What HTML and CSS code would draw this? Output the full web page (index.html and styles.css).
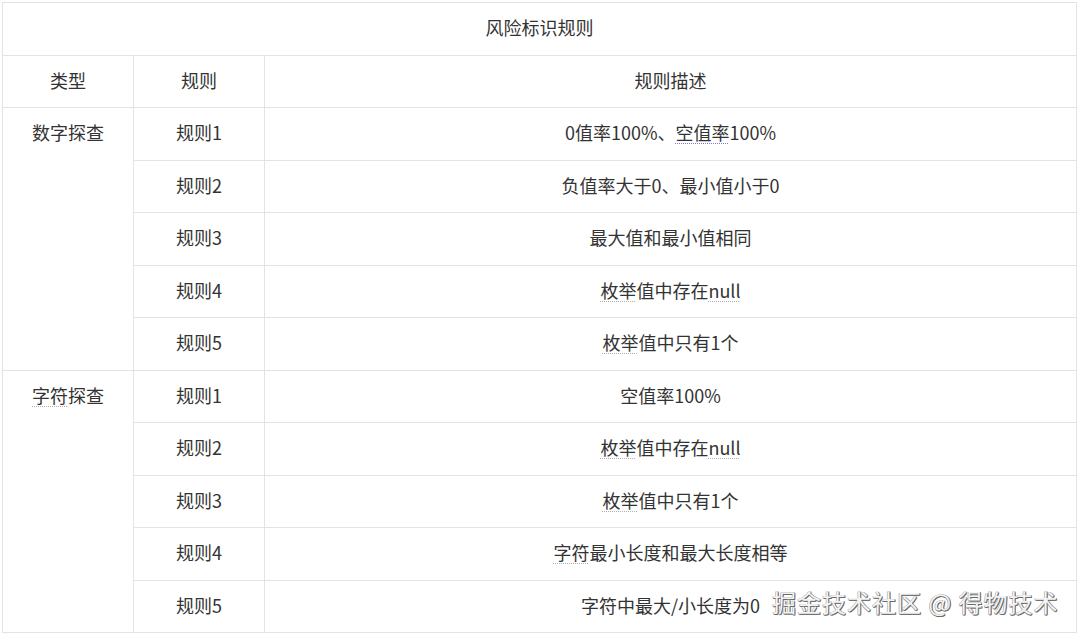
FILE: index.html
```html
<!DOCTYPE html>
<html lang="zh">
<head>
<meta charset="utf-8">
<title>风险标识规则</title>
<link rel="stylesheet" href="styles.css">
</head>
<body>
<div class="wrap">
<table class="rules">
  <colgroup>
    <col class="c-type">
    <col class="c-rule">
    <col class="c-desc">
  </colgroup>
  <tr><td colspan="3">风险标识规则</td></tr>
  <tr><td>类型</td><td>规则</td><td>规则描述</td></tr>
  <tr><td rowspan="5" class="type">数字探查</td><td>规则1</td><td>0值率100%、<span class="sp-purple">空值率</span>100%</td></tr>
  <tr><td>规则2</td><td>负值率大于0、最小值小于0</td></tr>
  <tr><td>规则3</td><td>最大值和最小值相同</td></tr>
  <tr><td>规则4</td><td><span class="sp">枚举</span>值中存在<span class="sp">null</span></td></tr>
  <tr><td>规则5</td><td><span class="sp">枚举</span>值中只有1个</td></tr>
  <tr><td rowspan="5" class="type"><span class="sp">字符</span>探查</td><td>规则1</td><td>空值率100%</td></tr>
  <tr><td>规则2</td><td><span class="sp">枚举</span>值中存在<span class="sp">null</span></td></tr>
  <tr><td>规则3</td><td><span class="sp">枚举</span>值中只有1个</td></tr>
  <tr><td>规则4</td><td><span class="sp">字符</span>最小长度和最大长度相等</td></tr>
  <tr><td>规则5</td><td>字符中最大/小长度为0</td></tr>
</table>
<div class="watermark">掘金技术社区 @ 得物技术</div>
</div>
</body>
</html>
```

FILE: styles.css
```css
html, body {
  margin: 0;
  padding: 0;
  background: #ffffff;
}
body {
  font-family: "Noto Sans CJK SC", "Noto Sans", sans-serif;
  color: #333333;
}
.wrap {
  position: relative;
  width: 1080px;
  height: 634px;
  padding: 2px 0 0 2px;
  box-sizing: border-box;
}
.rules {
  border-collapse: collapse;
  width: 1075px;
  table-layout: fixed;
  font-size: 18px;
  line-height: 26px;
}
.c-type { width: 131px; }
.c-rule { width: 131px; }
.rules td {
  border: 1px solid #e3e3e3;
  height: 52.5px;
  padding: 0 0 3px 0;
  box-sizing: border-box;
  text-align: center;
  vertical-align: middle;
}
.rules td.type {
  vertical-align: top;
  padding-top: 11px;
}
.sp {
  text-decoration: underline dotted #b0b0b0;
  text-decoration-thickness: 1px;
  text-underline-offset: 3px;
}
.sp-purple {
  text-decoration: underline dotted #7d78e0;
  text-decoration-thickness: 1px;
  text-underline-offset: 3px;
}
.watermark {
  position: absolute;
  left: 772px;
  top: 586px;
  font-size: 24px;
  line-height: 32px;
  color: #f4f4f4;
  letter-spacing: 1px;
  text-shadow: 1px 1px 0 #6a6a6a, -0.5px -0.5px 0 #9a9a9a, 1px 0 0 #888, 0 1px 0 #888;
}
```
